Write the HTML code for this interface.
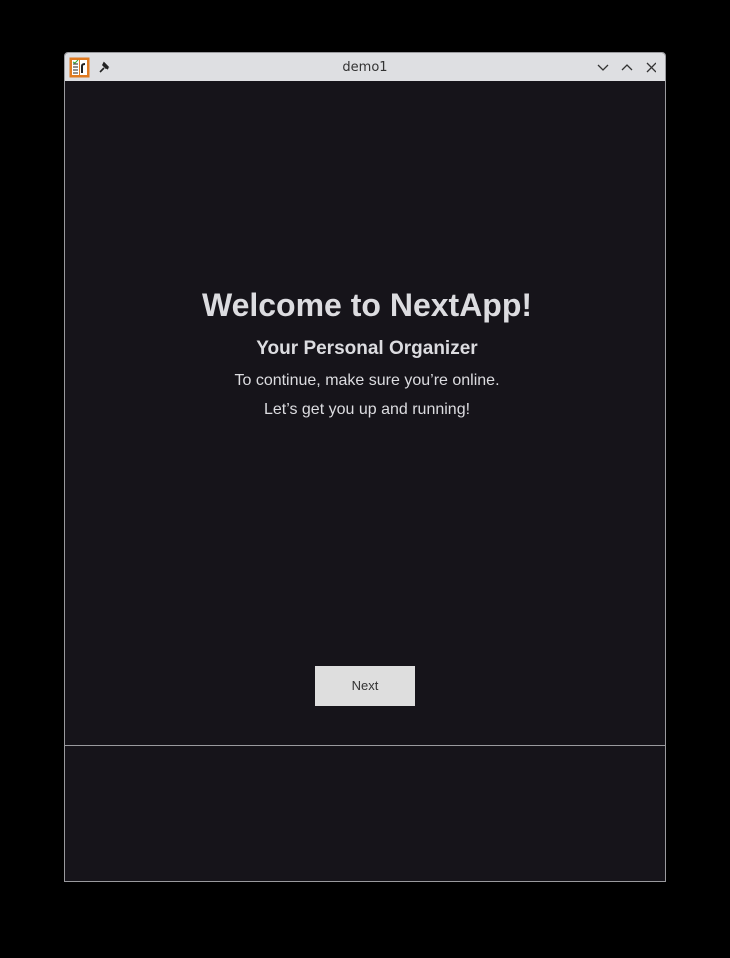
<!DOCTYPE html>
<html><head><style>
body{margin:0;background:#000;width:730px;height:958px;position:relative;font-family:"Liberation Sans",sans-serif;overflow:hidden}
.win{position:absolute;left:64px;top:52px;width:600px;height:828px;border:1px solid #9a9a9e;border-radius:4px 4px 0 0;background:#16141a;overflow:hidden}
.tb{position:absolute;left:0;top:0;width:600px;height:28px;background:#dedfe2}
.tt{position:absolute;left:0;width:600px;top:7px;text-align:center;font-size:13px;color:#333;font-family:"DejaVu Sans",sans-serif}
.c{position:absolute;left:0;width:600px;text-align:center;color:#dcdce0}
.btn{position:absolute;left:250px;top:613px;width:100px;height:40px;background:#dedede;color:#333;font-size:13px;text-align:center;line-height:40px}
.sep{position:absolute;left:0;top:692px;width:600px;height:1px;background:#9a9a9e}
</style></head><body>
<div class="win">
<div class="tb">
<svg style="position:absolute;left:4px;top:4px" width="21" height="21"><rect x="0.5" y="0.5" width="20" height="20" fill="#e07a20"/><rect x="3" y="3" width="7" height="15" fill="#fff"/><rect x="11" y="3" width="7" height="15" fill="#fff"/><path d="M4 7h5M4 10h5M4 13h5M4 16h5" stroke="#222"/><path d="M4 5l2 1l3-3" stroke="#3a3" fill="none"/><path d="M13 16v-7q0-2 3-2" stroke="#222" stroke-width="2" fill="none"/></svg>
<svg style="position:absolute;left:33px;top:8px" width="12" height="12"><path d="M2 11l4-4M5 3l5 5M6 2l4 4l-2 1l-3-3z" stroke="#222" stroke-width="1.6" fill="#222"/></svg>
<div class="tt">demo1</div>
<svg style="position:absolute;left:531px;top:9px" width="60" height="12"><path d="M2 3l5 5l5-5" stroke="#333" stroke-width="1.3" fill="none"/><path d="M26 8l5-5l5 5" stroke="#333" stroke-width="1.3" fill="none"/><path d="M51 1l9 9M60 1l-9 9" stroke="#333" stroke-width="1.3"/></svg>
</div>
<div class="c" style="top:234px;left:2px;font-size:32px;font-weight:bold">Welcome to NextApp!</div>
<div class="c" style="top:285px;left:2px;font-size:19px;font-weight:bold">Your Personal Organizer</div>
<div class="c" style="top:319px;left:2px;font-size:16px">To continue, make sure you’re online.</div>
<div class="c" style="top:348px;left:2px;font-size:16px">Let’s get you up and running!</div>
<div class="btn">Next</div>
<div class="sep"></div>
</div>
</body></html>
